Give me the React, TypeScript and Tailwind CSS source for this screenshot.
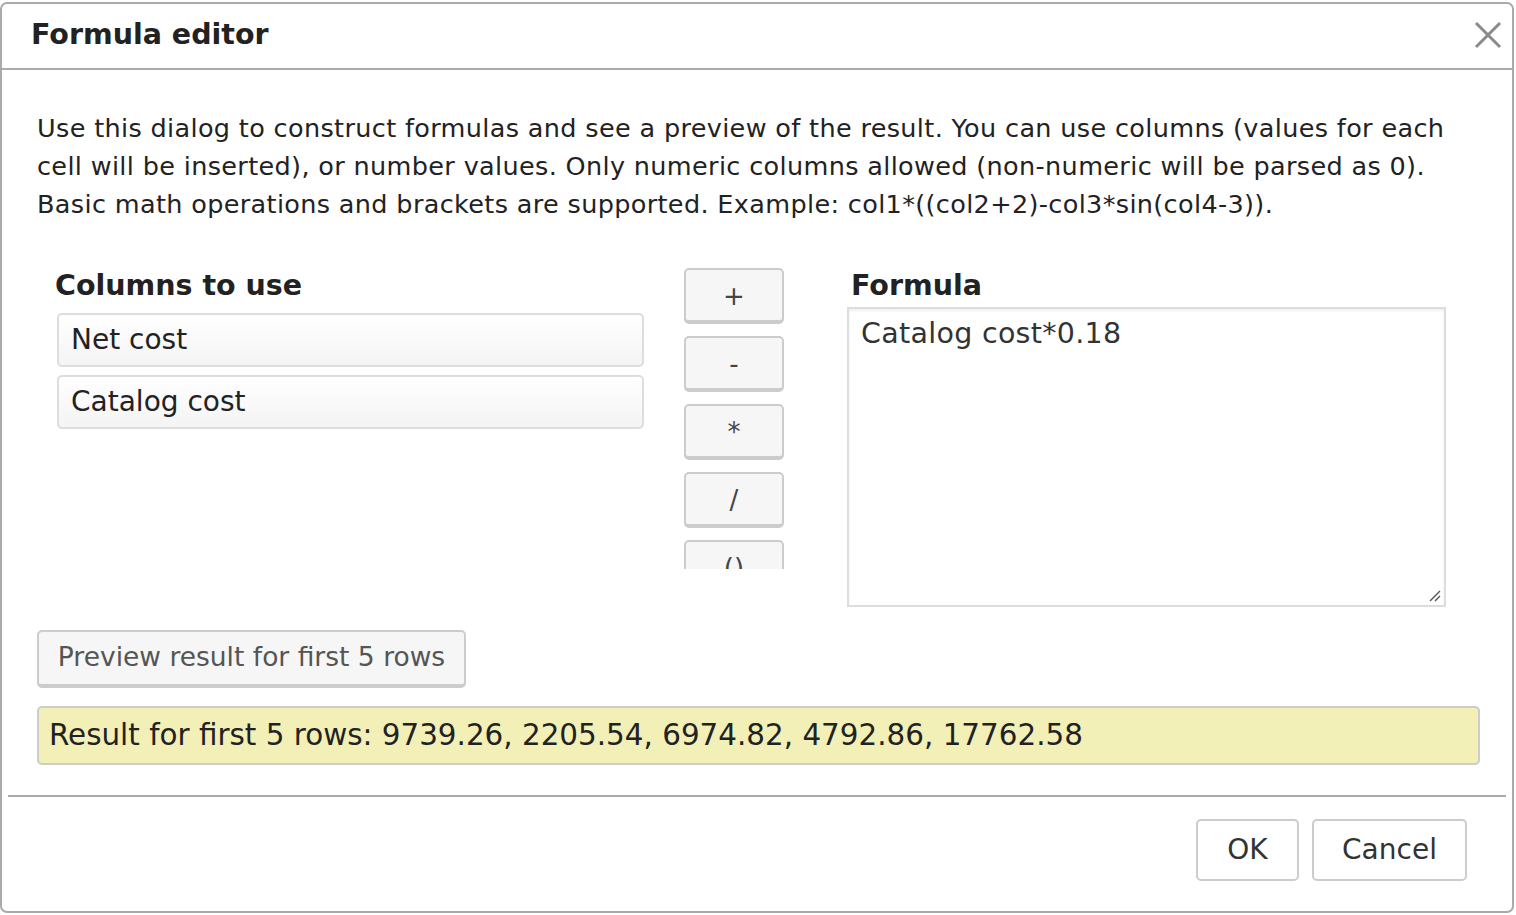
import React from 'react'

const font = { fontFamily: '"DejaVu Sans", Verdana, sans-serif' }

const ops = ['+', '-', '*', '/', '()']

const App: React.FC = () => {
  return (
    <div className="w-[1516px] h-[915px] bg-white pt-[2px]" style={font}>
      <div className="w-[1514px] h-[911px] border-2 border-[#aaa] rounded-[7px] flex flex-col">
        {/* Header */}
        <div className="h-[66px] shrink-0 border-b-2 border-[#aaa] flex items-center justify-between pl-[29px] pr-[7px]">
          <h1 className="text-[28.5px] font-bold text-[#222] mt-[-2px]">Formula editor</h1>
          <button className="w-[34px] h-[34px] flex items-center justify-center mt-[-2px]">
            <svg width="28" height="28" viewBox="0 0 28 28" stroke="#8a8a8a" strokeWidth="3" fill="none">
              <path d="M2 2 L26 26 M26 2 L2 26" />
            </svg>
          </button>
        </div>

        {/* Body */}
        <div className="flex-1 pl-[35px] pr-[31px]">
          <p className="mt-[39px] text-[25.5px] leading-[38px] text-[#222] tracking-[0.35px] whitespace-nowrap">
            Use this dialog to construct formulas and see a preview of the result. You can use columns (values for each
            <br />
            cell will be inserted), or number values. Only numeric columns allowed (non-numeric will be parsed as 0).
            <br />
            Basic math operations and brackets are supported. Example: col1*((col2+2)-col3*sin(col4-3)).
          </p>

          <div className="flex mt-[49px]">
            <div className="w-[590px] ml-[18px]">
              <h2 className="text-[28.5px] font-bold text-[#222] leading-[32px] mt-[-2px]">Columns to use</h2>
              <div className="mt-[11px] pl-[2px] flex flex-col gap-[8px]">
                {['Net cost', 'Catalog cost'].map((c) => (
                  <div
                    key={c}
                    className="h-[54px] w-[587px] border-2 border-[#ddd] rounded-[5px] bg-gradient-to-b from-white to-[#f4f4f4] flex items-center pl-[12px] text-[28px] text-[#222]"
                  >
                    {c}
                  </div>
                ))}
              </div>
            </div>

            <div className="ml-[39px] w-[100px] h-[301px] overflow-hidden flex flex-col gap-[12px] mt-[-4px]">
              {ops.map((o) => (
                <button
                  key={o}
                  className="shrink-0 h-[56px] w-[100px] border-2 border-[#ccc] border-b-[4px] rounded-[5px] bg-[#f6f6f6] text-[26px] text-[#444] flex items-center justify-center pt-[2px]"
                >
                  {o}
                </button>
              ))}
            </div>

            <div className="ml-[63px] w-[600px]">
              <h2 className="text-[28.5px] font-bold text-[#222] leading-[32px] mt-[-2px] ml-[4px]">Formula</h2>
              <div className="relative mt-[5px] h-[300px] w-[599px] border-2 border-[#ddd] bg-white shadow-[inset_0_2px_3px_rgba(0,0,0,0.06)] pl-[12px] pt-[4px]">
                <span className="text-[28.5px] text-[#333] tracking-[0.3px]">Catalog cost*0.18</span>
                <svg className="absolute right-[3px] bottom-[3px]" width="12" height="12" viewBox="0 0 12 12" stroke="#555" strokeWidth="1.4">
                  <path d="M1 11 L11 1 M6 11 L11 6" />
                </svg>
              </div>
            </div>
          </div>

          <button className="mt-[23px] h-[58px] w-[429px] border-2 border-[#ccc] border-b-[4px] rounded-[5px] bg-[#f6f6f6] text-[26.5px] text-[#555] flex items-center justify-center pb-[2px]">
            Preview result for first 5 rows
          </button>

          <div className="mt-[18px] h-[59px] w-[1443px] border-2 border-[#ccc] rounded-[5px] bg-[#f2efb7] flex items-center pl-[10px] text-[29.4px] text-[#222]">
            Result for first 5 rows: 9739.26, 2205.54, 6974.82, 4792.86, 17762.58
          </div>
        </div>

        {/* Footer */}
        <div className="h-[116px] shrink-0 mx-[6px] border-t-2 border-[#aaa] flex items-start justify-end gap-[13px] pr-[39px] pt-[22px]">
          <button className="h-[62px] w-[103px] border-2 border-[#ccc] rounded-[5px] bg-white text-[28px] text-[#333]">OK</button>
          <button className="h-[62px] w-[155px] border-2 border-[#ccc] rounded-[5px] bg-white text-[28px] text-[#333]">Cancel</button>
        </div>
      </div>
    </div>
  )
}

export default App
